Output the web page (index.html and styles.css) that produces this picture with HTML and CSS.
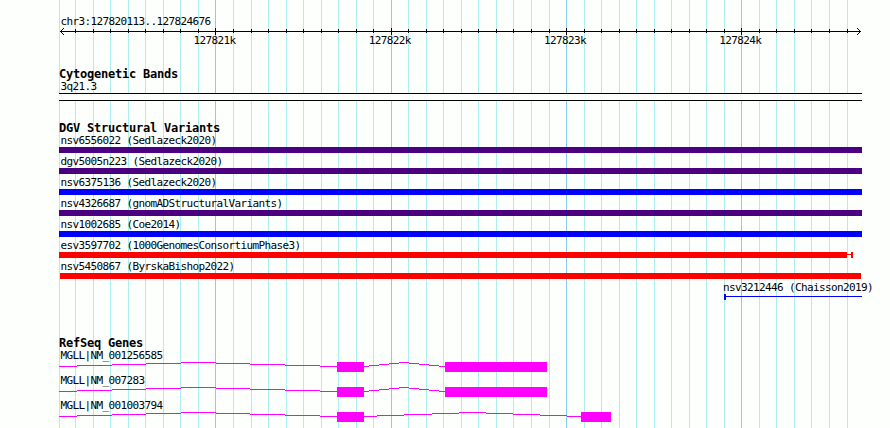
FILE: index.html
```
<!DOCTYPE html>
<html lang="en">
<head>
<meta charset="utf-8">
<title>chr3:127820113..127824676</title>
<link rel="stylesheet" href="styles.css">
</head>
<body>
<main class="browser">
  <svg class="grid" width="890" height="428" shape-rendering="crispEdges" aria-hidden="true">
    <path class="minor" d="M59.5 0v428M75.5 0v428M93.5 0v428M110.5 0v428M128.5 0v428M145.5 0v428M163.5 0v428M180.5 0v428M198.5 0v428M233.5 0v428M251.5 0v428M268.5 0v428M286.5 0v428M303.5 0v428M321.5 0v428M338.5 0v428M356.5 0v428M373.5 0v428M408.5 0v428M426.5 0v428M443.5 0v428M461.5 0v428M478.5 0v428M496.5 0v428M513.5 0v428M531.5 0v428M549.5 0v428M584.5 0v428M601.5 0v428M619.5 0v428M636.5 0v428M654.5 0v428M671.5 0v428M689.5 0v428M706.5 0v428M724.5 0v428M759.5 0v428M776.5 0v428M794.5 0v428M811.5 0v428M829.5 0v428M847.5 0v428"/>
    <path class="major" d="M215.5 0v428M391.5 0v428M566.5 0v428M741.5 0v428"/>
  </svg>

  <header class="ruler">
    <div class="label">chr3:127820113..127824676</div>
    <svg class="axis" width="803" height="7" viewBox="59 28 803 7" shape-rendering="crispEdges">
      <path d="M60 31.5H861M75.5 29v4M93.5 29v4M110.5 29v4M128.5 29v4M145.5 29v4M163.5 29v4M180.5 29v4M198.5 29v4M233.5 29v4M251.5 29v4M268.5 29v4M286.5 29v4M303.5 29v4M321.5 29v4M338.5 29v4M356.5 29v4M373.5 29v4M408.5 29v4M426.5 29v4M443.5 29v4M461.5 29v4M478.5 29v4M496.5 29v4M513.5 29v4M531.5 29v4M549.5 29v4M584.5 29v4M601.5 29v4M619.5 29v4M636.5 29v4M654.5 29v4M671.5 29v4M689.5 29v4M706.5 29v4M724.5 29v4M759.5 29v4M776.5 29v4M794.5 29v4M811.5 29v4M829.5 29v4M847.5 29v4M215.5 28v7M391.5 28v7M566.5 28v7M741.5 28v7"/>
      <path d="M61 30.5h1M62 29.5h1M63 28.5h1M61 32.5h1M62 33.5h1M63 34.5h1M859 30.5h1M858 29.5h1M857 28.5h1M859 32.5h1M858 33.5h1M857 34.5h1"/>
    </svg>
    <div class="ticks"><span>127821k</span><span>127822k</span><span>127823k</span><span>127824k</span></div>
  </header>

  <section class="track cyto">
    <h2>Cytogenetic Bands</h2>
    <div class="label">3q21.3</div>
    <div class="band"></div>
  </section>

  <section class="track variants">
    <h2>DGV Structural Variants</h2>
    <div class="row"><div class="label">nsv6556022 (Sedlazeck2020)</div><div class="bar indigo"></div></div>
    <div class="row"><div class="label">dgv5005n223 (Sedlazeck2020)</div><div class="bar indigo"></div></div>
    <div class="row"><div class="label">nsv6375136 (Sedlazeck2020)</div><div class="bar blue"></div></div>
    <div class="row"><div class="label">nsv4326687 (gnomADStructuralVariants)</div><div class="bar indigo"></div></div>
    <div class="row"><div class="label">nsv1002685 (Coe2014)</div><div class="bar blue"></div></div>
    <div class="row"><div class="label">esv3597702 (1000GenomesConsortiumPhase3)</div>
      <svg width="803" height="6" shape-rendering="crispEdges" fill="#f00"><path d="M0 0H788V6H0zM788 2H792V3H788zM792 0H794V6H792z"/></svg></div>
    <div class="row"><div class="label">nsv5450867 (ByrskaBishop2022)</div><div class="bar red inset"></div></div>
    <div class="row partial"><div class="label">nsv3212446 (Chaisson2019)</div>
      <svg width="138" height="6" shape-rendering="crispEdges" fill="#00f"><path d="M0 0H2V6H0zM2 2H138V3H2z"/></svg></div>
  </section>

  <section class="track genes">
    <h2>RefSeq Genes</h2>
    <div class="gene"><div class="label">MGLL|NM_001256585</div>
      <svg width="803" height="10" viewBox="59 0 803 10" shape-rendering="crispEdges"><path class="intron" d="M59 4.5H77M77 3.5H112M112 2.5H146M146 1.5H181M181 .5H216M216 1.5H250M250 2.5H285M285 3.5H320M320 4.5H337M364 4.5H369M369 3.5H379M379 2.5H389M389 1.5H399M399 .5H409M409 1.5H419M419 2.5H429M429 3.5H439M439 4.5H445"/><path class="exon" d="M337 0h27v10h-27zM445 0h102v10H445z"/></svg></div>
    <div class="gene"><div class="label">MGLL|NM_007283</div>
      <svg width="803" height="10" viewBox="59 0 803 10" shape-rendering="crispEdges"><path class="intron" d="M59 4.5H77M77 3.5H112M112 2.5H146M146 1.5H181M181 .5H216M216 1.5H250M250 2.5H285M285 3.5H320M320 4.5H337M364 4.5H369M369 3.5H379M379 2.5H389M389 1.5H399M399 .5H409M409 1.5H419M419 2.5H429M429 3.5H439M439 4.5H445"/><path class="exon" d="M337 0h27v10h-27zM445 0h102v10H445z"/></svg></div>
    <div class="gene"><div class="label">MGLL|NM_001003794</div>
      <svg width="803" height="10" viewBox="59 0 803 10" shape-rendering="crispEdges"><path class="intron" d="M59 4.5H77M77 3.5H112M112 2.5H146M146 1.5H181M181 .5H216M216 1.5H250M250 2.5H285M285 3.5H320M320 4.5H337M364 4.5H377M377 3.5H404M404 2.5H432M432 1.5H459M459 .5H486M486 1.5H513M513 2.5H540M540 3.5H567M567 4.5H581"/><path class="exon" d="M337 0h27v10h-27zM581 0h30v10h-30z"/></svg></div>
  </section>
</main>
</body>
</html>
```
FILE: styles.css
```
* { box-sizing: border-box; }

body {
  margin: 0;
  background: #fdfffc;
  color: #000;
  font: 11px/13px "DejaVu Sans Mono", monospace;
  letter-spacing: -0.622px;
}

svg { display: block; }

.browser {
  position: relative;
  width: 890px;
  height: 428px;
  padding: 15px 28px 0 59px;
  overflow: hidden;
}

/* Grid lines run behind every track. */
.grid {
  position: absolute;
  inset: 0;
  z-index: -1;
  fill: none;
}

.minor { stroke: #afeeee; }
.major { stroke: #87ceeb; }

.label {
  height: 13px;
  padding-left: 1.4px;
  white-space: pre;
}

.ruler { height: 53px; }
.axis { stroke: #000; fill: none; }

.ticks {
  display: flex;
  gap: 133.3px;
  margin-top: -1px;
  padding-left: 134.4px;
}

.ticks span { width: 42px; }

h2 {
  height: 12px;
  margin: 0;
  font-size: 12px;
  line-height: 12px;
  font-weight: bold;
  letter-spacing: -0.224px;
}

.cyto { height: 54px; }

.band {
  height: 8px;
  border: solid #000;
  border-width: 1px 0;
  background: #fdfffc;
}

.variants { height: 215px; }
.row { height: 21px; }
.bar { height: 6px; }
.indigo { background: #4b0082; }
.blue { background: #00f; }
.red { background: #f00; }
.inset { margin: 0 1px; }
.partial { padding-left: 665px; }
.partial .label { padding: 0; margin-left: -1px; }

.gene { height: 25px; }
.intron { stroke: #f0f; fill: none; }
.exon { fill: #f0f; }
```
